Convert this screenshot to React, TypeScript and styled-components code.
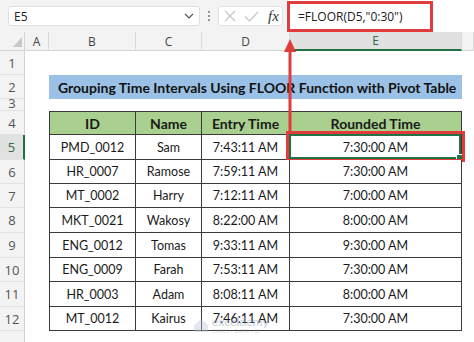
import styled, { createGlobalStyle } from "styled-components";

const GlobalStyle = createGlobalStyle`
  html, body {
    margin: 0;
    padding: 0;
    background: #ffffff;
  }
  body {
    font-family: "Lato", "Liberation Sans", sans-serif;
  }
`;

type Entry = { id: string; name: string; entry: string; rounded: string };

const entries: Entry[] = [
  { id: "PMD_0012", name: "Sam", entry: "7:43:11 AM", rounded: "7:30:00 AM" },
  { id: "HR_0007", name: "Ramose", entry: "7:59:11 AM", rounded: "7:30:00 AM" },
  { id: "MT_0002", name: "Harry", entry: "7:12:11 AM", rounded: "7:00:00 AM" },
  { id: "MKT_0021", name: "Wakosy", entry: "8:22:00 AM", rounded: "8:00:00 AM" },
  { id: "ENG_0012", name: "Tomas", entry: "9:33:11 AM", rounded: "9:30:00 AM" },
  { id: "ENG_0009", name: "Farah", entry: "7:53:11 AM", rounded: "7:30:00 AM" },
  { id: "HR_0003", name: "Adam", entry: "8:08:11 AM", rounded: "8:00:00 AM" },
  { id: "MT_0012", name: "Kairus", entry: "7:46:11 AM", rounded: "7:30:00 AM" },
];

const colLetters = ["A", "B", "C", "D", "E"];
const rowHeights = [24, 24, 12, 24, 25, 24, 24, 25, 25, 24, 25, 24, 30];
const RED = "#e23b3b";
const GREEN = "#217346";

function App() {
  return (
    <Page>
      <GlobalStyle />
      <TopBar>
        <NameBox>
          <span>E5</span>
          <svg width="10" height="6" viewBox="0 0 10 6">
            <path d="M1 1 L5 5 L9 1" fill="none" stroke="#555" strokeWidth="1.2" />
          </svg>
        </NameBox>
        <Dots>
          <i />
          <i />
          <i />
        </Dots>
        <FxBox>
          <svg width="12" height="12" viewBox="0 0 12 12">
            <path d="M1 1 L11 11 M11 1 L1 11" stroke="#c4c4c4" strokeWidth="1.1" />
          </svg>
          <svg width="15" height="11" viewBox="0 0 15 11">
            <path d="M1 5.5 L5.5 10 L14 1" fill="none" stroke="#c4c4c4" strokeWidth="1.1" />
          </svg>
          <FxLabel>fx</FxLabel>
        </FxBox>
        <FormulaField>
          <FormulaBox>=FLOOR(D5,"0:30")</FormulaBox>
        </FormulaField>
      </TopBar>

      <Sheet $heights={rowHeights}>
        <Corner>
          <svg width="9" height="10" viewBox="0 0 9 10">
            <polygon points="9,0 9,10 0,10" fill="#c8c8c8" />
          </svg>
        </Corner>
        {colLetters.map((c) => (
          <ColHead key={c} $active={c === "E"}>
            {c}
          </ColHead>
        ))}
        <ColHead $active={false} />

        {rowHeights.map((_, i) => {
          const n = i + 1;
          const cells = [];
          if (n === 2) {
            cells.push(<Blank key="a" />);
            cells.push(
              <Title key="t">Grouping Time Intervals Using FLOOR Function with Pivot Table</Title>
            );
            cells.push(<Blank key="f" />);
          } else if (n === 4) {
            cells.push(<Blank key="a" />);
            ["ID", "Name", "Entry Time", "Rounded Time"].map((h, j) =>
              cells.push(
                <HeadCell key={h} $first={j === 0}>
                  {h}
                </HeadCell>
              )
            );
            cells.push(<Blank key="f" />);
          } else if (n >= 5 && n <= 12) {
            const e = entries[n - 5];
            cells.push(<Blank key="a" />);
            cells.push(
              <DataCell key="id" $first>
                {e.id}
              </DataCell>
            );
            cells.push(<DataCell key="nm">{e.name}</DataCell>);
            cells.push(<DataCell key="en">{e.entry}</DataCell>);
            cells.push(
              <DataCell key="rd">
                {e.rounded}
                {n === 5 && (
                  <>
                    <Selected>
                      <FillHandle />
                    </Selected>
                    <Highlight />
                  </>
                )}
              </DataCell>
            );
            cells.push(<Blank key="f" />);
          } else {
            for (let k = 0; k < 6; k++) cells.push(<Blank key={k} />);
          }
          return [
            <RowHead key={"h" + n} $active={n === 5} $short={n === 3}>
              {n <= 12 ? n : ""}
            </RowHead>,
            ...cells.map((c, k) => <Slot key={n + "-" + k}>{c}</Slot>),
          ];
        })}
      </Sheet>

      <Arrow width="14" height="95" viewBox="0 0 14 95">
        <polygon points="7,1 1,14 13,14" fill={RED} />
        <rect x="5.5" y="12" width="3" height="83" fill={RED} />
      </Arrow>

      <Watermark>
        <svg width="16" height="16" viewBox="0 0 16 16">
          <path d="M1 8 L8 2 L15 8 L15 15 L1 15 Z" fill="#b8c6d6" />
        </svg>
        <div>
          <b>exceldemy</b>
          <small>EXCEL · DATA · BI</small>
        </div>
      </Watermark>
    </Page>
  );
}

export default App;

const Page = styled.div`
  position: relative;
  width: 474px;
  height: 342px;
  overflow: hidden;
  background: #ffffff;
`;

const TopBar = styled.div`
  height: 32px;
  background: #f3f3f3;
  display: flex;
  align-items: center;
  padding-left: 8px;
  box-sizing: border-box;
  font-family: "Open Sans", "Noto Sans", sans-serif;
`;

const NameBox = styled.div`
  width: 192px;
  height: 20px;
  background: #ffffff;
  border: 1px solid #e0e0e0;
  border-radius: 3px;
  box-sizing: border-box;
  display: flex;
  align-items: center;
  justify-content: space-between;
  padding: 0 5px 0 5px;
  font-size: 12px;
  color: #222;
`;

const Dots = styled.div`
  width: 18px;
  display: flex;
  flex-direction: column;
  align-items: center;
  gap: 2px;

  i {
    width: 2px;
    height: 2px;
    border-radius: 50%;
    background: #777;
  }
`;

const FxBox = styled.div`
  width: 65px;
  height: 20px;
  background: #ffffff;
  border: 1px solid #e3e3e3;
  border-radius: 3px;
  box-sizing: border-box;
  display: flex;
  align-items: center;
  gap: 8px;
  padding-left: 5px;
`;

const FxLabel = styled.span`
  font-family: "Liberation Serif", "DejaVu Serif", serif;
  font-style: italic;
  font-size: 15px;
  color: #333;
  margin-left: 1px;
`;

const FormulaField = styled.div`
  flex: 1;
  align-self: stretch;
  margin-left: 3px;
  background: #ffffff;
  padding-top: 1px;
  padding-left: 1px;
`;

const FormulaBox = styled.div`
  width: 146px;
  height: 31px;
  box-sizing: border-box;
  border: 3.5px solid ${RED};
  display: flex;
  align-items: center;
  padding-left: 8px;
  font-size: 12px;
  color: #222;
`;

const Sheet = styled.div<{ $heights: number[] }>`
  display: grid;
  grid-template-columns: 25px 24px 87px 66px 88px 172px 1fr;
  grid-template-rows: 19px ${(p) => p.$heights.map((h) => h + "px").join(" ")};
  font-size: 12.5px;
  color: #1a1a1a;
`;

const Corner = styled.div`
  background: #f3f3f3;
  border-bottom: 1px solid #d4d4d4;
  border-right: 1px solid #d4d4d4;
  display: flex;
  align-items: flex-end;
  justify-content: flex-end;
  padding: 0 2px 3px 0;
  box-sizing: border-box;
`;

const ColHead = styled.div<{ $active: boolean }>`
  background: ${(p) => (p.$active ? "#e1e1e1" : "#f3f3f3")};
  border-right: 1px solid #dadada;
  border-bottom: ${(p) => (p.$active ? `2px solid ${GREEN}` : "1px solid #d4d4d4")};
  box-sizing: border-box;
  display: flex;
  align-items: center;
  justify-content: center;
  font-family: "Open Sans", "Noto Sans", sans-serif;
  font-size: 12px;
  color: ${(p) => (p.$active ? "#2f6b48" : "#444")};
`;

const RowHead = styled.div<{ $active: boolean; $short: boolean }>`
  background: ${(p) => (p.$active ? "#e1e1e1" : "#f3f3f3")};
  border-right: ${(p) => (p.$active ? `2px solid ${GREEN}` : "1px solid #d4d4d4")};
  border-bottom: 1px solid #e2e2e2;
  box-sizing: border-box;
  display: flex;
  align-items: ${(p) => (p.$short ? "flex-start" : "center")};
  justify-content: center;
  overflow: hidden;
  font-family: "Open Sans", "Noto Sans", sans-serif;
  font-size: 13px;
  line-height: ${(p) => (p.$short ? "8px" : "normal")};
  color: ${(p) => (p.$active ? "#2f6b48" : "#555")};
`;

const Slot = styled.div`
  display: contents;
`;

const Blank = styled.div`
  background: #ffffff;
`;

const Title = styled.div`
  grid-column: span 4;
  background: #9bc2e6;
  display: flex;
  align-items: center;
  padding-left: 9px;
  font-weight: 700;
  font-size: 14px;
  color: #111;
  white-space: nowrap;
`;

const TableCell = styled.div<{ $first?: boolean }>`
  position: relative;
  box-sizing: border-box;
  border-right: 1px solid #3a3a3a;
  border-bottom: 1px solid #3a3a3a;
  border-left: ${(p) => (p.$first ? "1px solid #3a3a3a" : "none")};
  display: flex;
  align-items: center;
  justify-content: center;
  white-space: nowrap;
`;

const HeadCell = styled(TableCell)`
  background: #a9d08e;
  border-top: 1px solid #3a3a3a;
  font-weight: 700;
  font-size: 14px;
`;

const DataCell = styled(TableCell)`
  background: #ffffff;
`;

const Selected = styled.div`
  position: absolute;
  inset: -1px 0 0 -1px;
  border: 2px solid ${GREEN};
  pointer-events: none;
`;

const FillHandle = styled.div`
  position: absolute;
  right: -4px;
  bottom: -4px;
  width: 5px;
  height: 5px;
  background: ${GREEN};
  border: 1px solid #fff;
`;

const Highlight = styled.div`
  position: absolute;
  inset: -4px -4px -3px -4px;
  border: 3.5px solid ${RED};
  pointer-events: none;
`;

const Arrow = styled.svg`
  position: absolute;
  left: 283px;
  top: 38px;
`;

const Watermark = styled.div`
  position: absolute;
  left: 193px;
  top: 316px;
  display: flex;
  align-items: center;
  gap: 3px;
  opacity: 0.4;
  color: #8aa0b8;
  font-family: "Lato", sans-serif;

  b {
    display: block;
    font-size: 12px;
    line-height: 12px;
  }
  small {
    display: block;
    font-size: 5px;
    letter-spacing: 0.5px;
  }
`;
